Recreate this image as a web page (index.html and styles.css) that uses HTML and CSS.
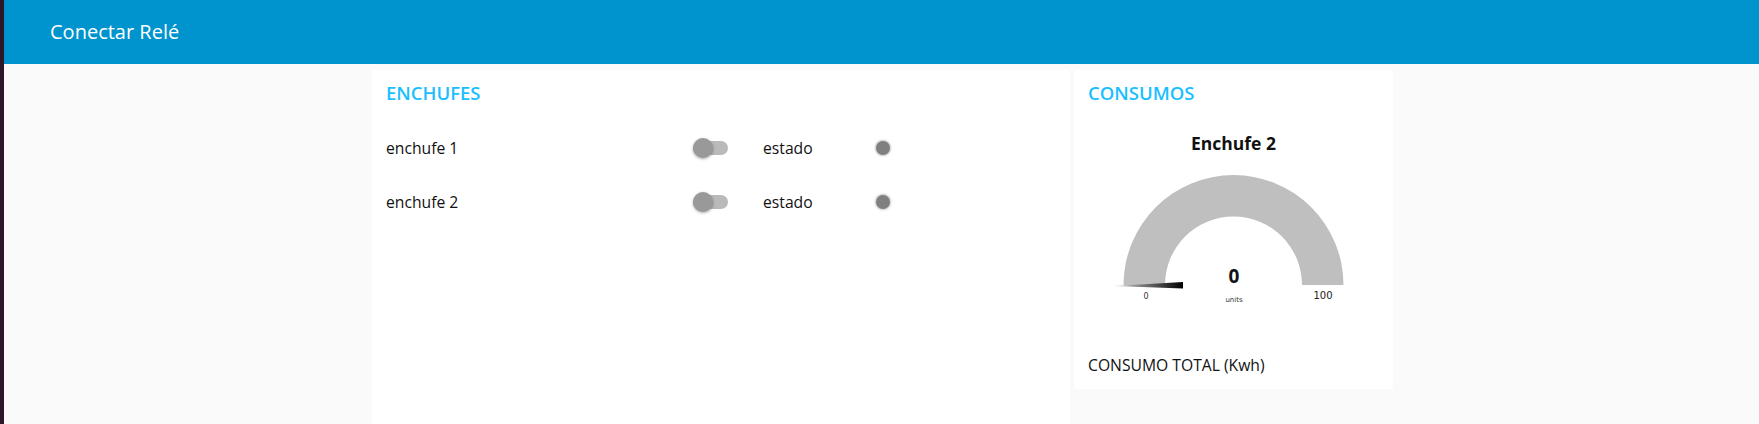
FILE: index.html
```html
<!DOCTYPE html>
<html lang="es">
<head>
<meta charset="utf-8">
<title>Conectar Relé</title>
<link rel="stylesheet" href="styles.css">
</head>
<body>
<div class="strip"></div>
<div class="app">
  <header class="toolbar">Conectar Relé</header>
  <main class="content">
    <section class="card card-left">
      <h2 class="card-title">ENCHUFES</h2>
      <div class="row">
        <span class="label">enchufe 1</span>
        <span class="switch"><span class="track"></span><span class="thumb"></span></span>
        <span class="label estado">estado</span>
        <span class="led"></span>
      </div>
      <div class="row">
        <span class="label">enchufe 2</span>
        <span class="switch"><span class="track"></span><span class="thumb"></span></span>
        <span class="label estado">estado</span>
        <span class="led"></span>
      </div>
    </section>
    <section class="card card-right">
      <h2 class="card-title">CONSUMOS</h2>
      <div class="gauge">
        <div class="gauge-title">Enchufe 2</div>
        <svg class="gauge-svg" width="319" height="173" viewBox="0 0 319 173">
          <defs>
            <linearGradient id="needle" x1="0" y1="0" x2="1" y2="0">
              <stop offset="0" stop-color="#cfcfcf"/>
              <stop offset="1" stop-color="#000000"/>
            </linearGradient>
          </defs>
          <path d="M 49.5 123 A 110 110 0 0 1 269.5 123 L 228 123 A 68.5 68.5 0 0 0 91 123 Z" fill="#bfbfbf"/>
          <polygon points="40,124 109,120 109,126.5" fill="url(#needle)"/>
          <text x="160" y="121" class="g-value">0</text>
          <text x="160" y="140" class="g-units">units</text>
          <text x="72" y="136.5" class="g-min">0</text>
          <text x="249" y="137" class="g-max">100</text>
        </svg>
      </div>
      <div class="row text-row">
        <span class="label">CONSUMO TOTAL (Kwh)</span>
      </div>
    </section>
  </main>
</div>
</body>
</html>
```
FILE: styles.css
```css
* { box-sizing: border-box; }
html, body { margin: 0; padding: 0; height: 100%; }
body {
  display: flex;
  font-family: "Open Sans", "Noto Sans", sans-serif;
  color: #111111;
  background: #fafafa;
  overflow: hidden;
}
.strip {
  width: 4px;
  flex: none;
  background: #2d1829;
}
.app {
  flex: 1;
  display: flex;
  flex-direction: column;
  min-width: 0;
}
.toolbar {
  height: 64px;
  flex: none;
  background: #0094ce;
  color: #ffffff;
  font-size: 20px;
  line-height: 64px;
  padding-left: 46px;
}
.content {
  flex: 1;
  display: flex;
  align-items: flex-start;
  gap: 4px;
  padding: 6px 0 0 368px;
  background: #fafafa;
}
.card {
  background: #ffffff;
  padding: 0 14px;
}
.card-left {
  width: 698px;
  height: 354px;
}
.card-right {
  width: 319px;
  height: 319px;
}
.card-title {
  margin: 0;
  height: 48px;
  line-height: 46px;
  font-size: 18.5px;
  font-weight: 600;
  color: #1bbfff;
}
.row {
  display: grid;
  grid-template-columns: 307px 35px 35px 112px 16px;
  align-items: center;
  height: 48px;
  margin-top: 6px;
  font-size: 15.7px;
}
.switch {
  position: relative;
  display: block;
  width: 35px;
  height: 20px;
}
.track {
  position: absolute;
  left: 0;
  right: 0;
  top: 3px;
  height: 14px;
  border-radius: 7px;
  background: #bababa;
}
.thumb {
  position: absolute;
  left: 0;
  top: 0;
  width: 20px;
  height: 20px;
  border-radius: 50%;
  background: #999999;
  box-shadow: 0 1px 3px rgba(0,0,0,0.35);
}
.estado { grid-column: 4; }
.led {
  grid-column: 5;
  width: 14px;
  height: 14px;
  margin-left: 1px;
  border-radius: 50%;
  background: #808080;
  box-shadow: 0 0 2px 1px rgba(128,128,128,0.45);
}
.gauge {
  margin: 6px -14px 0;
  height: 211px;
}
.gauge-title {
  height: 38px;
  line-height: 38px;
  text-align: center;
  font-size: 17.5px;
  font-weight: 700;
}
.gauge-svg { display: block; }
.g-value { font-family: "Open Sans", sans-serif; font-weight: 700; font-size: 19px; text-anchor: middle; fill: #111; }
.g-units { font-family: "DejaVu Sans", sans-serif; font-size: 7px; text-anchor: middle; fill: #333; }
.g-min { font-family: "DejaVu Sans", sans-serif; font-size: 8px; text-anchor: middle; fill: #333; }
.g-max { font-family: "DejaVu Sans", sans-serif; font-size: 10px; text-anchor: middle; fill: #222; }
.text-row {
  display: flex;
  height: 48px;
}
```
